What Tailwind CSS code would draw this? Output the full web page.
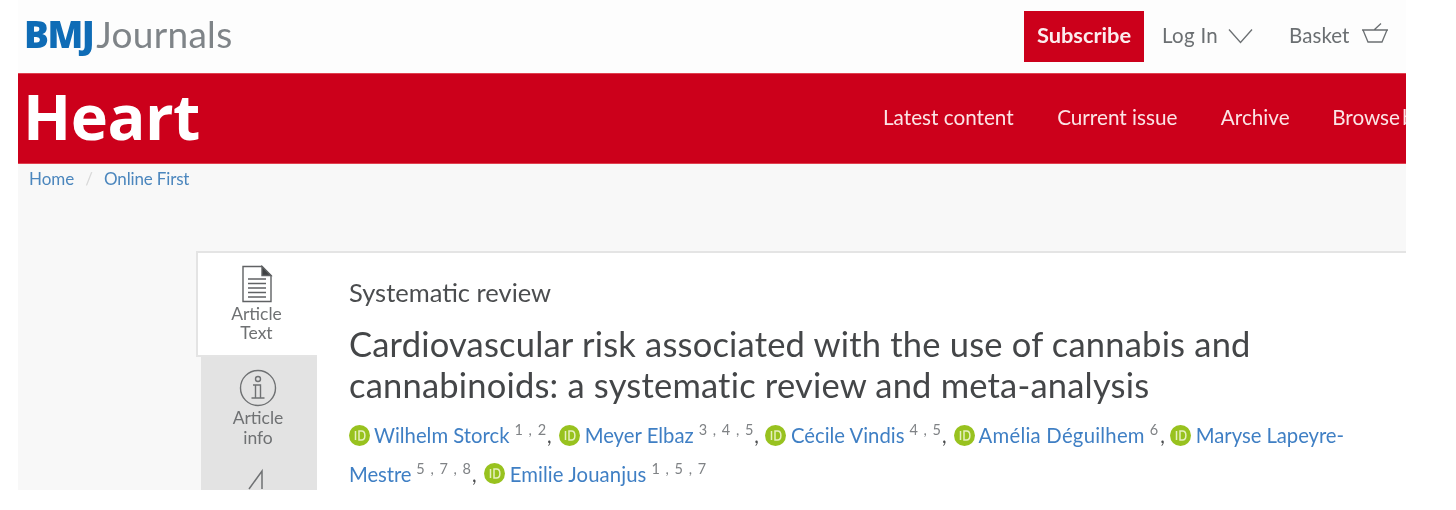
<!doctype html>
<html><head><meta charset="utf-8"><script src="https://cdn.jsdelivr.net/npm/@tailwindcss/browser@4"></script></head>
<body class="bg-white">
<div class="w-[1456px] h-[510px] overflow-hidden bg-white font-['Lato','Open_Sans',sans-serif] blur-[0.5px]">
<div class="ml-[18px] w-[1388px] h-[490px] overflow-hidden flex flex-col">
  <header class="h-[73px] shrink-0 flex bg-[#fdfdfd]">
    <div class="flex items-start pl-[6px] pt-[11px] w-[1006px]">
      <span class="font-['Open_Sans',sans-serif] font-extrabold text-[37px] leading-[46px] text-[#0f6cb6] tracking-[-1.500px]">BMJ</span>
      <span class="ml-[3px] font-['Lato',sans-serif] text-[37px] leading-[46px] text-[#7f8488] tracking-[0.3px]">Journals</span>
    </div>
    <a class="mt-[11px] w-[120px] h-[51px] bg-[#cc001b] text-[#fbecee] font-bold text-[21.8px] flex items-center justify-center pb-[2px]">Subscribe</a>
    <div class="ml-[18px] mt-[11px] h-[51px] pb-[2px] flex items-center text-[20.5px] text-[#6b6f72]">
      <span class="tracking-[0.3px]">Log In</span>
      <svg class="ml-[10px]" width="25" height="16" viewBox="0 0 25 16" fill="none" stroke="#6b6f72" stroke-width="1.3"><path d="M1 1.5 12.5 14.5 24 1.5"/></svg>
      <span class="ml-[36px] tracking-[0.05px]">Basket</span>
      <svg class="ml-[12px] -mt-[3px]" width="28" height="24" viewBox="0 0 28 24" fill="none" stroke="#6b6f72" stroke-width="1.3"><path d="M1 8H27M2 8 7 20H21L26 8M13 8 20 1.5"/></svg>
    </div>
  </header>
  <nav class="h-[91px] shrink-0 bg-[#cc001b] flex items-center overflow-hidden border-t border-b border-[#e0404f]">
    <div class="pl-[5px] w-[861px] shrink-0 text-white font-['Open_Sans',sans-serif] font-bold text-[63px] leading-none -mt-[6px] tracking-[-0.5px]">Heart</div>
    <div class="shrink-0 whitespace-nowrap flex gap-[43.500px] text-[20.7px] text-[#fbe4e6] pb-[1px]">
      <span class="ml-[4px]">Latest content</span><span>Current issue</span><span>Archive</span><span class="shrink-0 -ml-[1px] [word-spacing:-3px]">Browse by</span>
    </div>
  </nav>
  <main class="flex-1 bg-[#f8f8f8] overflow-hidden">
    <div class="h-[87px] pl-[11px] pt-[4px] text-[17px] leading-[22px] text-[#4b86bd] flex">
      <span>Home</span><span class="mx-[11px] text-[#d8d8d8]">/</span><span class="tracking-[-0.15px]">Online First</span>
    </div>
    <div class="ml-[178px] flex h-[240px]">
      <div class="w-[121px] shrink-0 flex flex-col items-start">
        <div class="w-[121px] h-[107px] bg-white border-t-2 border-l-2 border-b-2 border-[#e4e4e4] flex flex-col items-center pt-[12px] pr-[2px] text-[#6f7173] text-[17.5px] leading-[19.5px] relative z-10">
          <svg width="32" height="38" viewBox="0 0 32 38" fill="none" stroke="#606264" stroke-width="1.4"><path d="M2 1.5H21L30 10.5V36.5H2Z"/><path d="M21 1.5 30 10.5H21Z" fill="#404244"/><path d="M7 14H25M7 18.500H25M7 23H25M7 27.500H25M7 32H25"/></svg>
          <span class="mt-[0.5px]">Article</span><span>Text</span>
        </div>
        <div class="ml-[5px] w-[116px] flex-1 bg-[#e3e3e3] flex flex-col items-center pt-[12px] pr-[2px] text-[#6f7173] text-[17.5px] leading-[19.5px]">
          <svg width="38" height="38" viewBox="0 0 38 38" fill="none" stroke="#6f7173" stroke-width="1.4"><circle cx="19" cy="19" r="17.500"/><circle cx="19" cy="10" r="2.500"/><path d="M14 16H21.500V28.500M12.500 29H25.500M16.500 16V28.500"/></svg>
          <span class="mt-[1px]">Article</span><span>info</span>
          <svg class="mt-[20px]" width="24" height="24" viewBox="0 0 24 24" fill="none" stroke="#6f7173" stroke-width="1.5"><path d="M3 22 16 4 16 22"/></svg>
        </div>
      </div>
      <article class="flex-1 bg-white border-t-2 border-[#e4e4e4] pl-[32px] pt-[24px] text-[#4b4d4f]">
        <p class="text-[25.5px] leading-[30px]">Systematic review</p>
        <h1 class="mt-[16px] text-[34.5px] leading-[41px] text-[#444648] tracking-[0.2px]">Cardiovascular risk associated with the use of cannabis and<br>cannabinoids: a systematic review and meta-analysis</h1>
        <div class="mt-[11px] text-[20.3px] leading-[38.500px] text-[#3f7fc4] w-[1010px]">
          <div class="flex items-center whitespace-nowrap">
            <svg class="mr-[4px]" width="21" height="21" viewBox="0 0 21 21"><circle cx="10.500" cy="10.500" r="10.500" fill="#98c21f"/><path d="M6.500 6V15M10 6V15H12.500C17 15 17 6 12.500 6Z" fill="none" stroke="#e6f0c0" stroke-width="1.500"/></svg>
            <span>Wilhelm Storck</span><span class="ml-[5px] -mt-[10px] text-[14.5px] tracking-[1px] text-[#7f8285]">1 , 2</span><span class="text-[#4b4d4f]">,</span>
            <svg class="ml-[7px] mr-[5px]" width="21" height="21" viewBox="0 0 21 21"><circle cx="10.500" cy="10.500" r="10.500" fill="#98c21f"/><path d="M6.500 6V15M10 6V15H12.500C17 15 17 6 12.500 6Z" fill="none" stroke="#e6f0c0" stroke-width="1.500"/></svg>
            <span>Meyer Elbaz</span><span class="ml-[5px] -mt-[10px] text-[14.5px] tracking-[1px] text-[#7f8285]">3 , 4 , 5</span><span class="text-[#4b4d4f]">,</span>
            <svg class="ml-[6px] mr-[5px]" width="21" height="21" viewBox="0 0 21 21"><circle cx="10.500" cy="10.500" r="10.500" fill="#98c21f"/><path d="M6.500 6V15M10 6V15H12.500C17 15 17 6 12.500 6Z" fill="none" stroke="#e6f0c0" stroke-width="1.500"/></svg>
            <span>Cécile Vindis</span><span class="ml-[5px] -mt-[10px] text-[14.5px] tracking-[1px] text-[#7f8285]">4 , 5</span><span class="text-[#4b4d4f]">,</span>
            <svg class="ml-[7px] mr-[4px]" width="21" height="21" viewBox="0 0 21 21"><circle cx="10.500" cy="10.500" r="10.500" fill="#98c21f"/><path d="M6.500 6V15M10 6V15H12.500C17 15 17 6 12.500 6Z" fill="none" stroke="#e6f0c0" stroke-width="1.500"/></svg>
            <span class="tracking-[0.25px]">Amélia Déguilhem</span><span class="ml-[5px] -mt-[10px] text-[14.5px] text-[#7f8285]">6</span><span class="ml-[2px] text-[#4b4d4f]">,</span>
            <svg class="ml-[5px] mr-[5px]" width="21" height="21" viewBox="0 0 21 21"><circle cx="10.500" cy="10.500" r="10.500" fill="#98c21f"/><path d="M6.500 6V15M10 6V15H12.500C17 15 17 6 12.500 6Z" fill="none" stroke="#e6f0c0" stroke-width="1.500"/></svg>
            <span class="tracking-[-0.05px]">Maryse Lapeyre-</span>
          </div>
          <div class="flex items-center whitespace-nowrap">
            <span class="tracking-[-0.1px]">Mestre</span><span class="ml-[5px] -mt-[10px] text-[14.5px] tracking-[1px] text-[#7f8285]">5 , 7 , 8</span><span class="text-[#4b4d4f]">,</span>
            <svg class="ml-[7px] mr-[5px]" width="21" height="21" viewBox="0 0 21 21"><circle cx="10.500" cy="10.500" r="10.500" fill="#98c21f"/><path d="M6.500 6V15M10 6V15H12.500C17 15 17 6 12.500 6Z" fill="none" stroke="#e6f0c0" stroke-width="1.500"/></svg>
            <span class="tracking-[0.1px]">Emilie Jouanjus</span><span class="ml-[5px] -mt-[10px] text-[14.5px] tracking-[1px] text-[#7f8285]">1 , 5 , 7</span>
          </div>
        </div>
      </article>
    </div>
  </main>
</div>
</div>
</body></html>
